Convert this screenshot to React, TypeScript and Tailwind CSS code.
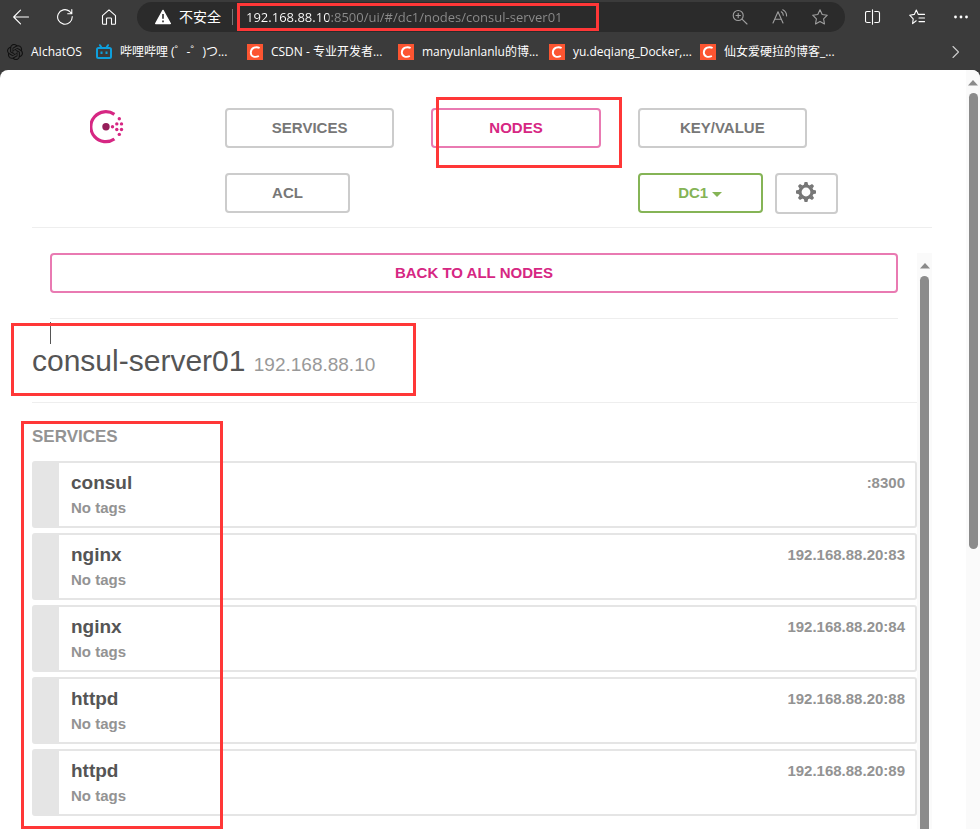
import type { ReactNode } from 'react';
import { SiOpenai } from 'react-icons/si';

const bookmarks = [
  { name: '哔哩哔哩 (゜-゜)つ...', icon: <BilibiliIcon /> },
  { name: 'CSDN - 专业开发者...', icon: <CsdnIcon /> },
  { name: 'manyulanlanlu的博...', icon: <CsdnIcon /> },
  { name: 'yu.deqiang_Docker,...', icon: <CsdnIcon /> },
  { name: '仙女爱硬拉的博客_...', icon: <CsdnIcon /> },
];

const services = [
  { name: 'consul', address: ':8300' },
  { name: 'nginx', address: '192.168.88.20:83' },
  { name: 'nginx', address: '192.168.88.20:84' },
  { name: 'httpd', address: '192.168.88.20:88' },
  { name: 'httpd', address: '192.168.88.20:89' },
];

function Icon({ children, className = '' }: { children: ReactNode; className?: string }) {
  return (
    <svg
      className={`size-4 shrink-0 ${className}`}
      viewBox="0 0 16 16"
      fill="none"
      stroke="currentColor"
      strokeWidth={1.1}
      strokeLinecap="round"
      strokeLinejoin="round"
      aria-hidden="true"
    >
      {children}
    </svg>
  );
}

function BilibiliIcon() {
  return (
    <svg className="size-4 shrink-0" viewBox="0 0 16 16" fill="none" stroke="#0e9fdc" strokeWidth={2} aria-hidden="true">
      <rect x="1" y="4" width="14" height="10" rx="1.5" />
      <path d="M4 1.200 5.500 3.500M12 1.200 10.500 3.500" strokeLinecap="round" />
      <path d="M5.500 7.500v2.500M10.500 7.500v2.500" />
    </svg>
  );
}

function CsdnIcon() {
  return (
    <svg className="size-4 shrink-0" viewBox="0 0 16 16" aria-hidden="true">
      <rect width="16" height="16" fill="#fc5531" />
      <path d="M12.600 4C9.400 2.300 4.200 3.300 3.800 8.300c-.1 4.900 4.800 5.200 8.100 3.700" fill="none" stroke="#fff" strokeWidth="1.9" />
    </svg>
  );
}

function ConsulLogo() {
  return (
    <svg className="size-[34px]" viewBox="0 0 34 34" fill="#d62783" role="img" aria-label="Consul">
      <path d="M24.400 4.400A15 15 0 1 0 24.400 29" fill="none" stroke="#d62783" strokeWidth="3.2" />
      <circle cx="16" cy="16.700" r="3.7" fill="#961d59" />
      <circle cx="22.500" cy="16.700" r="1.7" />
      <circle cx="26.800" cy="13.900" r="1.7" />
      <circle cx="26.800" cy="19.500" r="1.7" />
      <circle cx="31.500" cy="13.900" r="1.7" />
      <circle cx="31.500" cy="19.500" r="1.7" />
      <circle cx="29.300" cy="8.800" r="1.7" />
      <circle cx="29.300" cy="24.400" r="1.7" />
    </svg>
  );
}

function CogIcon() {
  return (
    <svg className="mb-1 size-5" viewBox="0 0 20 20" fill="currentColor" aria-hidden="true">
      <circle cx="10" cy="10" r="6" fill="none" stroke="currentColor" strokeWidth="3.2" />
      {[0, 45, 90, 135, 180, 225, 270, 315].map((angle) => (
        <path key={angle} d="M7.800 3 8.600 0h2.800l.8 3z" transform={`rotate(${angle} 10 10)`} />
      ))}
    </svg>
  );
}

function Highlight({ className }: { className: string }) {
  return <div className={`pointer-events-none absolute z-10 border-3 border-[#ff3737] ${className}`} />;
}

function ScrollArrow() {
  return (
    <svg className="h-1.5 w-2.5 shrink-0" viewBox="0 0 10 6" fill="#8b8b8b" aria-hidden="true">
      <path d="M0 5.500 5 0l5 5.500z" />
    </svg>
  );
}

function BrowserBar() {
  return (
    <header className="bg-[#3b3b3b] pt-0.5 pb-0.5 font-['Open_Sans','Noto_Sans_CJK_SC',sans-serif] text-white">
      <div className="flex h-[30px] items-center pr-[11px] pl-[13px]">
        <div className="flex items-center gap-7">
          <button aria-label="Back">
            <Icon><path d="M15.500 8H.8M7.500 1.200.7 8l6.800 6.800" /></Icon>
          </button>
          <button aria-label="Refresh">
            <Icon><path d="M15.200 7.500A7.300 7.300 0 1 1 12.500 2.300L14.800 4.600M14.800.6v4.100h-4.100" /></Icon>
          </button>
          <button aria-label="Home">
            <Icon><path d="M1.500 6.600 8 .9l6.500 5.700v7.800c0 .5-.3.800-.8.800h-3.200V9.800c0-.5-.3-.8-.8-.8H6.300c-.5 0-.8.3-.8.8v5.400H2.300c-.5 0-.8-.3-.8-.8z" /></Icon>
          </button>
        </div>

        {/* Address bar */}
        <div className="ml-5 flex h-full min-w-0 flex-1 items-center rounded-full bg-[#2b2b2b] pr-[17px] pl-[18px]">
          <svg className="size-4 shrink-0" viewBox="0 0 16 16" aria-hidden="true">
            <path d="M8 1.400 15.300 14.500H.7z" fill="#fff" stroke="#fff" strokeWidth="1.4" strokeLinejoin="round" />
            <path d="M8 5v4.800M8 11.400v1.800" stroke="#2b2b2b" strokeWidth="1.6" />
          </svg>
          <span className="ml-2 shrink-0 text-sm">不安全</span>
          <span className="ml-[11px] h-4 w-px shrink-0 bg-[#777]" />
          <div className="relative ml-[13px] flex min-w-0 flex-1">
            <input
              type="text"
              aria-label="Address"
              readOnly
              value="192.168.88.10:8500/ui/#/dc1/nodes/consul-server01"
              className="h-5 w-full bg-[linear-gradient(to_right,#fff_83px,#8c8c8c_83px)] bg-clip-text text-[13px] text-transparent outline-none"
            />
            <Highlight className="-top-1 -bottom-1 -left-[9px] w-[362px]" />
          </div>
          <div className="flex gap-6 text-[#a0a0a0]">
            <button aria-label="Zoom">
              <Icon><path d="M11.200 6.500a5 5 0 1 1-10 0 5 5 0 0 1 10 0zM10 10.200l5 4.800M6.200 4.300v4.400M4 6.500h4.400" /></Icon>
            </button>
            <button aria-label="Read aloud">
              <Icon><path d="M1 14 6 2.800 11 14M2.800 10.200h6.400M9.300 2.800c1.200.7 1.900 1.800 2 3.500M10.800.8c2.600 1.200 3.800 3.300 3.800 6.200" /></Icon>
            </button>
            <button aria-label="Add to favorites">
              <Icon><path d="m8 .8 2.200 4.700 5.100.7-3.700 3.600.9 5.200L8 12.500 3.500 15l.9-5.200L.7 6.200l5.100-.7z" /></Icon>
            </button>
          </div>
        </div>

        <div className="ml-5 flex items-center gap-7">
          <button aria-label="Split screen">
            <Icon><path d="M7.500.7v14.600M5.200 2.500H2.200C1.300 2.500.5 3.100.5 4v8c0 .9.8 1.500 1.700 1.500h3M9.800 2.500h3c.9 0 1.700.6 1.700 1.500v8c0 .9-.8 1.500-1.700 1.500h-3" /></Icon>
          </button>
          <button aria-label="Favorites">
            <Icon><path d="M7.200 11.800 3.600 14.600l.6-4.700L.7 6.200l4.600-.8L7.300 1l2 4.400h6.200M10 9h5.500M10 12.600h5.500" /></Icon>
          </button>
          <button aria-label="Settings and more">
            <Icon className="fill-current stroke-none">
              <circle cx="2.500" cy="8" r="1.4" />
              <circle cx="8" cy="8" r="1.4" />
              <circle cx="13.500" cy="8" r="1.4" />
            </Icon>
          </button>
        </div>
      </div>

      {/* Bookmarks */}
      <nav className="mt-1 flex h-8 items-center gap-3.5 pr-4 pl-[7px] text-xs whitespace-nowrap">
        <a href="#" className="flex items-center gap-2">
          <SiOpenai className="size-4 text-[#111]" />
          AIchatOS
        </a>
        {bookmarks.map((bookmark) => (
          <a key={bookmark.name} href="#" className="flex w-[137px] shrink-0 items-center gap-2">
            {bookmark.icon}
            {bookmark.name}
          </a>
        ))}
        <button aria-label="More bookmarks" className="ml-auto">
          <Icon className="text-[#ccc]"><path d="m5 2.500 5.500 5.500L5 13.500" /></Icon>
        </button>
      </nav>
    </header>
  );
}

function ConsulNav() {
  return (
    <div className="flex border-b border-[#eee] pt-[38px] pr-[125px] pb-[13px] text-[15px] leading-5 font-bold text-[#777]">
      <div className="w-[193px] shrink-0 pt-0.5 pl-[58px]">
        <a href="#"><ConsulLogo /></a>
      </div>
      <nav className="grid flex-1 grid-cols-3 gap-x-[37px] gap-y-[25px]">
        <a href="#" className="flex h-10 items-center justify-center rounded border-2 border-[#ccc]">SERVICES</a>
        <div className="relative">
          <a href="#" className="flex h-10 items-center justify-center rounded border-2 border-[#e97ab2] text-[#d62783]">NODES</a>
          <Highlight className="-top-[11px] -right-[21px] left-[5px] h-[71px]" />
        </div>
        <a href="#" className="flex h-10 items-center justify-center rounded border-2 border-[#ccc]">KEY/VALUE</a>
        <a href="#" className="flex h-10 w-[125px] items-center justify-center rounded border-2 border-[#ccc]">ACL</a>
        <div className="col-start-3 flex gap-3">
          <button className="flex h-10 w-[125px] shrink-0 items-center justify-center gap-1 rounded border-2 border-[#85b456] text-[#85b456]">
            DC1
            <svg className="mt-0.5 h-[5px] w-2.5" viewBox="0 0 10 5" fill="currentColor" aria-hidden="true">
              <path d="M0 0h10L5 5z" />
            </svg>
          </button>
          <button aria-label="Settings" className="flex h-[41px] w-[63px] shrink-0 items-center justify-center rounded border-2 border-[#ccc]">
            <CogIcon />
          </button>
        </div>
      </nav>
    </div>
  );
}

function NodeDetail() {
  return (
    <main className="min-w-0 flex-1">
      <div className="mr-[19px] ml-[18px] border-b border-[#eee] pb-[25px]">
        <a href="#" className="flex h-10 items-center justify-center rounded border-2 border-[#e97ab2] text-[15px] font-bold text-[#d62783]">
          BACK TO ALL NODES
        </a>
      </div>

      <div className="relative border-b border-[#eee] pt-[23px] pb-[23px]">
        {/* Text caret */}
        <span className="absolute top-[3px] left-[18px] h-[22px] w-px bg-[#555]" />
        <h2 className="text-3xl leading-[37px] text-[#555]">
          consul-server01 <small className="text-[19px] leading-6 text-[#999]">192.168.88.10</small>
        </h2>
        <Highlight className="top-1 -left-[21px] h-[73px] w-[405px]" />
      </div>

      <section className="relative pt-[22px] pb-[13px]">
        <h5 className="text-[17px] leading-6 font-bold text-[#939393]">SERVICES</h5>
        <ul className="mt-3 flex flex-col gap-[5px]">
          {services.map((service) => (
            <li key={service.address}>
              <a
                href="#"
                className="flex h-[67px] justify-between rounded-[3px] border-2 border-l-27 border-[#e5e5e5] pt-1.5 pr-2.5 pl-3 font-bold text-[#939393]"
              >
                <div>
                  <div className="text-[19px] leading-7 text-[#555]">{service.name}</div>
                  <div className="text-[15px] leading-[22px]">No tags</div>
                </div>
                <div className="pt-1 text-[15px] leading-5">{service.address}</div>
              </a>
            </li>
          ))}
        </ul>
        <Highlight className="top-[18px] bottom-0 -left-[11px] w-[202px]" />
      </section>
    </main>
  );
}

export default function App() {
  return (
    <div className="flex min-h-screen flex-col bg-[#3b3b3b]">
      <BrowserBar />
      <div className="flex flex-1 overflow-hidden rounded-t-lg bg-white font-['Liberation_Sans',Arial,sans-serif]">
        <div className="flex min-w-0 flex-1 flex-col pr-[34px] pl-8">
          <ConsulNav />
          <div className="mt-[25px] flex flex-1">
            <NodeDetail />
            <div className="flex w-[15px] shrink-0 flex-col items-center bg-[#fafafa] pt-2.5">
              <ScrollArrow />
              <div className="mt-[7px] w-[9px] flex-1 rounded-t-full bg-[#8b8b8b]" />
            </div>
          </div>
        </div>
        <div className="flex w-3.5 shrink-0 flex-col items-center bg-[#fafafa] pt-2.5">
          <ScrollArrow />
          <div className="mt-[7px] w-full flex-1">
            <div className="mx-auto h-[62%] w-[9px] rounded-full bg-[#8b8b8b]" />
          </div>
        </div>
      </div>
    </div>
  );
}
